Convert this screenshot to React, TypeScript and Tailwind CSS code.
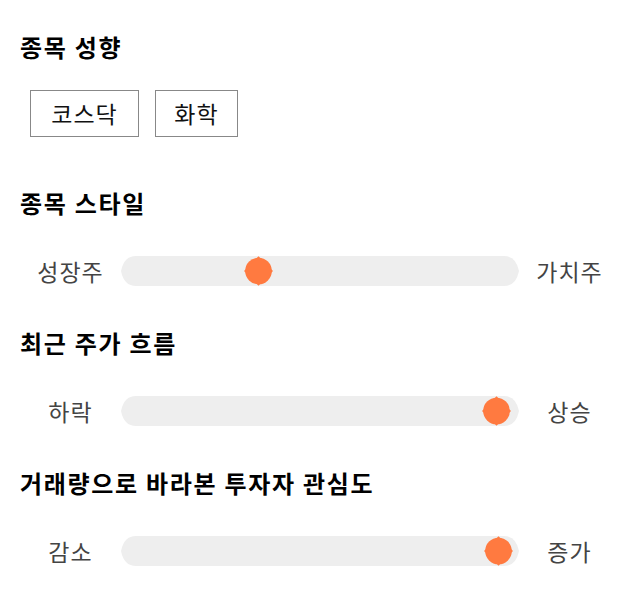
import React from "react";

const font = { fontFamily: '"Noto Sans CJK KR", "Noto Sans", sans-serif' };

function Track() {
  return (
    <svg className="absolute inset-0" width="398" height="30" viewBox="0 0 398 30">
      <path
        d="M15 0 H383 Q395 0 398 15 Q395 30 383 30 H15 Q3 30 0 15 Q3 0 15 0 Z"
        fill="#eeeeee"
      />
    </svg>
  );
}

function Thumb({ left }: { left: number }) {
  return (
    <svg
      className="absolute top-0"
      style={{ left }}
      width="29"
      height="30"
      viewBox="0 0 29 30"
    >
      <circle cx="14.5" cy="15" r="13.3" fill="#ff7a40" />
      <polygon points="14.5,0.3 29,15 14.5,29.7 0,15" fill="#ff7a40" />
    </svg>
  );
}

function SliderRow({ left, right, pos }: { left: string; right: string; pos: number }) {
  return (
    <div className="flex items-center h-[30px]">
      <div className="w-[101px] text-center text-[23px] tracking-[1px] text-[#444]">{left}</div>
      <div className="relative w-[398px] h-[30px]">
        <Track />
        <Thumb left={pos} />
      </div>
      <div className="w-[101px] text-center text-[23px] tracking-[1px] text-[#444]">{right}</div>
    </div>
  );
}

const heading = "text-[24px] font-bold leading-[28px] tracking-[1.7px] text-black";

export default function App() {
  return (
    <div className="bg-white w-[640px] h-[606px] px-5 pt-[33px]" style={font}>
      <h2 className={heading}>종목 성향</h2>
      <div className="flex gap-4 ml-[10px] mt-[29px]">
        <div className="h-[47px] w-[109px] justify-center border border-[#888] flex items-center text-[23px] tracking-[1px] text-[#111]">코스닥</div>
        <div className="h-[47px] w-[83px] justify-center border border-[#888] flex items-center text-[23px] tracking-[1px] text-[#111]">화학</div>
      </div>

      <h2 className={heading + " mt-[52px]"}>종목 스타일</h2>
      <div className="mt-[39px]">
        <SliderRow left="성장주" right="가치주" pos={123} />
      </div>

      <h2 className={heading + " mt-[43px]"}>최근 주가 흐름</h2>
      <div className="mt-[39px]">
        <SliderRow left="하락" right="상승" pos={361} />
      </div>

      <h2 className={heading + " mt-[43px]"}>거래량으로 바라본 투자자 관심도</h2>
      <div className="mt-[39px]">
        <SliderRow left="감소" right="증가" pos={363} />
      </div>
    </div>
  );
}
